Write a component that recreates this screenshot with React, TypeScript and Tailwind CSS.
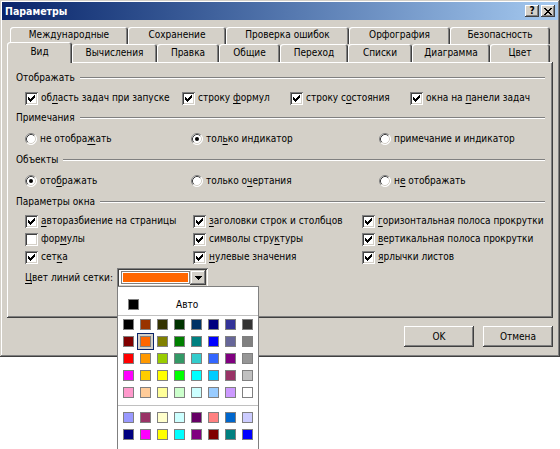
import React from 'react';

const CHART_FILLS = ['#9999ff', '#993366', '#ffffcc', '#ccffff', '#660066', '#ff8080', '#0066cc', '#ccccff'];
const CHART_LINES = ['#000080', '#ff00ff', '#ffff00', '#00ffff', '#800080', '#800000', '#008080', '#0000ff'];
const STANDARD = [
  ['#000000', '#993300', '#333300', '#003300', '#003366', '#000080', '#333399', '#333333'],
  ['#800000', '#ff6600', '#808000', '#008000', '#008080', '#0000ff', '#666699', '#808080'],
  ['#ff0000', '#ff9900', '#99cc00', '#339966', '#33cccc', '#3366ff', '#800080', '#969696'],
  ['#ff00ff', '#ffcc00', '#ffff00', '#00ff00', '#00ffff', '#00ccff', '#993366', '#c0c0c0'],
  ['#ff99cc', '#ffcc99', '#ffff99', '#ccffcc', '#ccffff', '#99ccff', '#cc99ff', '#ffffff'],
];

// text with one underlined access key
function M({ t, u }: { t: string; u?: number }) {
  if (u === undefined) return <>{t}</>;
  return (
    <>
      {t.slice(0, u)}
      <span className="underline underline-offset-[2px]">{t[u]}</span>
      {t.slice(u + 1)}
    </>
  );
}

function CheckBox({ checked }: { checked?: boolean }) {
  return (
    <span className="block w-[13px] h-[13px] shrink-0 bg-white shadow-[inset_1px_1px_#808080,inset_-1px_-1px_#ffffff,inset_2px_2px_#404040,inset_-2px_-2px_#d4d0c8]">
      {checked && (
        <svg width="13" height="13" viewBox="0 0 13 13" shapeRendering="crispEdges">
          <path
            transform="translate(1 1)"
            d="M8 2h1v1h-1z M7 3h2v1h-2z M2 4h1v1h-1z M6 4h3v1h-3z M2 5h2v1h-2z M5 5h3v1h-3z M2 6h5v1h-5z M3 7h3v1h-3z M4 8h1v1h-1z"
            fill="#000"
          />
        </svg>
      )}
    </span>
  );
}

function Radio({ checked }: { checked?: boolean }) {
  return (
    <svg width="12" height="12" viewBox="0 0 12 12" className="shrink-0">
      <circle cx="6" cy="6" r="5.5" fill="#fff" />
      <path d="M2.11 9.89 A5.5 5.5 0 0 1 9.89 2.11" stroke="#808080" fill="none" />
      <path d="M9.89 2.11 A5.5 5.5 0 0 1 2.11 9.89" stroke="#ffffff" fill="none" />
      <path d="M2.82 9.18 A4.5 4.5 0 0 1 9.18 2.82" stroke="#404040" fill="none" />
      <path d="M9.18 2.82 A4.5 4.5 0 0 1 2.82 9.18" stroke="#d4d0c8" fill="none" />
      {checked && <circle cx="6" cy="6" r="2" fill="#000" />}
    </svg>
  );
}

function Check({ t, u, checked, w }: { t: string; u?: number; checked?: boolean; w: string }) {
  return (
    <div className={`flex items-center gap-[3px] ${w}`}>
      <CheckBox checked={checked} />
      <span className="whitespace-nowrap">
        <M t={t} u={u} />
      </span>
    </div>
  );
}

function Option({ t, u, checked, w }: { t: string; u?: number; checked?: boolean; w: string }) {
  return (
    <div className={`flex items-center gap-[3px] ${w}`}>
      <Radio checked={checked} />
      <span className="whitespace-nowrap">
        <M t={t} u={u} />
      </span>
    </div>
  );
}

function Group({ title, mt }: { title: string; mt: string }) {
  return (
    <div className={`flex items-center h-[14px] pl-[9px] pr-[8px] ${mt}`}>
      <span className="whitespace-nowrap">{title}</span>
      <div className="flex-1 ml-[5px] h-[2px] border-t border-t-[#808080] border-b border-b-white" />
    </div>
  );
}

const backTabs = [
  { t: 'Международные', w: 'w-[118px]' },
  { t: 'Сохранение', w: 'w-[98px]' },
  { t: 'Проверка ошибок', w: 'w-[123px]' },
  { t: 'Орфография', w: 'w-[101px]' },
  { t: 'Безопасность', w: 'w-[100px]' },
];

const frontTabs = [
  { t: 'Вычисления', w: 'w-[85px]' },
  { t: 'Правка', w: 'w-[62px]' },
  { t: 'Общие', w: 'w-[61px]' },
  { t: 'Переход', w: 'w-[68px]' },
  { t: 'Списки', w: 'w-[64px]' },
  { t: 'Диаграмма', w: 'w-[78px]' },
  { t: 'Цвет', w: 'w-[60px]' },
];

function Swatch({ c, selected }: { c: string; selected?: boolean }) {
  return (
    <div
      className={`w-[17px] h-[17px] flex items-center justify-center ${
        selected ? 'border border-[#0a246a] bg-[#d4d0c8]' : ''
      }`}
    >
      <div className="w-[11px] h-[11px] border border-[#808080]" style={{ backgroundColor: c }} />
    </div>
  );
}

function Palette() {
  return (
    <div className="absolute left-[117px] top-[286px] w-[142px] h-[175px] bg-white border border-[#808080]">
      <div className="flex items-center h-[11px] mt-[12px] pl-[10px]">
        <div className="w-[11px] h-[11px] bg-black border border-[#808080]" />
        <span className="ml-[37px]">Авто</span>
      </div>
      <div className="mt-[5px] h-px bg-[#c0c0c0]" />
      <div className="pl-[2px]">
        {STANDARD.map((row, i) => (
          <div key={i} className="flex">
            {row.map((c, j) => (
              <Swatch key={j} c={c} selected={i === 1 && j === 1} />
            ))}
          </div>
        ))}
      </div>
      <div className="mt-[4px] h-px bg-[#c0c0c0]" />
      <div className="pl-[2px] mt-[3px]">
        {[CHART_FILLS, CHART_LINES].map((row, i) => (
          <div key={i} className="flex">
            {row.map((c, j) => (
              <Swatch key={j} c={c} />
            ))}
          </div>
        ))}
      </div>
    </div>
  );
}

export default function App() {
  return (
    <div className="relative w-[560px] h-[449px] overflow-hidden bg-white font-['DejaVu_Sans_Condensed','Liberation_Sans',Arial,sans-serif] text-[10px] leading-none text-[#000]">
      <div className="w-[560px] h-[357px] bg-[#d4d0c8] pt-[2px] px-[2px] flex flex-col shadow-[inset_-1px_-1px_#404040,inset_1px_1px_#d4d0c8,inset_-2px_-2px_#808080,inset_2px_2px_#ffffff]">
        {/* title bar */}
        <div className="h-[18px] bg-linear-to-r from-[#0a246a] to-[#a6caf0] flex items-center pl-[3px] pr-[3px]">
          <span className="font-bold text-white text-[10.5px]">Параметры</span>
          <div className="ml-auto flex gap-[2px]">
            <div className="w-[14px] h-[12px] bg-[#d4d0c8] flex items-center justify-center font-bold text-[10px] shadow-[inset_-1px_-1px_#404040,inset_1px_1px_#ffffff,inset_-2px_-2px_#808080,inset_2px_2px_#d4d0c8]">
              ?
            </div>
            <div className="w-[14px] h-[12px] bg-[#d4d0c8] flex items-center justify-center shadow-[inset_-1px_-1px_#404040,inset_1px_1px_#ffffff,inset_-2px_-2px_#808080,inset_2px_2px_#d4d0c8]">
              <svg width="8" height="7" viewBox="0 0 8 7" shapeRendering="crispEdges">
                <path
                  d="M0 0h2v1h-2z M6 0h2v1h-2z M1 1h2v1h-2z M5 1h2v1h-2z M2 2h4v1h-4z M3 3h2v1h-2z M2 4h4v1h-4z M1 5h2v1h-2z M5 5h2v1h-2z M0 6h2v1h-2z M6 6h2v1h-2z"
                  fill="#000"
                />
              </svg>
            </div>
          </div>
        </div>

        {/* tabs */}
        <div className="mt-[7px] ml-[8px] h-[17px] flex">
          {backTabs.map((tab) => (
            <div
              key={tab.t}
              className={`${tab.w} h-[17px] rounded-t-[3px] flex items-center justify-center pb-[1px] shadow-[inset_1px_1px_#ffffff,inset_-1px_0_#404040,inset_-2px_0_#808080]`}
            >
              {tab.t}
            </div>
          ))}
        </div>
        <div className="-mt-[2px] ml-[5px] h-[20px] flex items-start">
          <div className="relative z-10 w-[65px] h-[21px] bg-[#d4d0c8] rounded-t-[3px] flex items-center justify-center pb-[2px] shadow-[inset_1px_1px_#ffffff,inset_-1px_0_#404040,inset_-2px_0_#808080]">
            Вид
          </div>
          {frontTabs.map((tab) => (
            <div
              key={tab.t}
              className={`${tab.w} mt-[2px] h-[18px] bg-[#d4d0c8] rounded-t-[3px] flex items-center justify-center shadow-[inset_1px_1px_#ffffff,inset_-1px_0_#404040,inset_-2px_0_#808080]`}
            >
              {tab.t}
            </div>
          ))}
        </div>

        {/* panel */}
        <div className="ml-[5px] w-[546px] h-[256px] flex flex-col shadow-[inset_-1px_-1px_#404040,inset_1px_1px_#ffffff,inset_-2px_-2px_#808080]">
          <Group title="Отображать" mt="mt-[9px]" />
          <div className="mt-[5px] h-[16px] flex items-center pl-[18px]">
            <Check t="область задач при запуске" u={2} checked w="w-[157px]" />
            <Check t="строку формул" u={7} checked w="w-[108px]" />
            <Check t="строку состояния" u={8} checked w="w-[120px]" />
            <Check t="окна на панели задач" u={8} checked w="flex-1" />
          </div>

          <Group title="Примечания" mt="mt-[5px]" />
          <div className="mt-[6px] h-[16px] flex items-center pl-[18px]">
            <Option t="не отображать" u={9} w="w-[166px]" />
            <Option t="только индикатор" u={3} checked w="w-[188px]" />
            <Option t="примечание и индикатор" w="flex-1" />
          </div>

          <Group title="Объекты" mt="mt-[6px]" />
          <div className="mt-[6px] h-[16px] flex items-center pl-[18px]">
            <Option t="отображать" u={3} checked w="w-[166px]" />
            <Option t="только очертания" u={8} w="w-[188px]" />
            <Option t="не отображать" u={1} w="flex-1" />
          </div>

          <Group title="Параметры окна" mt="mt-[6px]" />
          <div className="mt-[3px] h-[18px] flex items-center pl-[18px]">
            <Check t="авторазбиение на страницы" u={0} checked w="w-[168px]" />
            <Check t="заголовки строк и столбцов" u={0} checked w="w-[169px]" />
            <Check t="горизонтальная полоса прокрутки" u={0} checked w="flex-1" />
          </div>
          <div className="h-[18px] flex items-center pl-[18px]">
            <Check t="формулы" u={3} w="w-[168px]" />
            <Check t="символы структуры" u={12} checked w="w-[169px]" />
            <Check t="вертикальная полоса прокрутки" u={0} checked w="flex-1" />
          </div>
          <div className="h-[18px] flex items-center pl-[18px]">
            <Check t="сетка" u={3} checked w="w-[168px]" />
            <Check t="нулевые значения" u={0} checked w="w-[169px]" />
            <Check t="ярлычки листов" u={0} checked w="flex-1" />
          </div>

          <div className="mt-[2px] h-[19px] flex items-center pl-[18px]">
            <span className="w-[92px] whitespace-nowrap">
              <M t="Цвет линий сетки:" u={0} />
            </span>
            <div className="w-[91px] h-[19px] bg-white flex items-center p-[2px] shadow-[inset_1px_1px_#808080,inset_-1px_-1px_#ffffff,inset_2px_2px_#404040,inset_-2px_-2px_#d4d0c8]">
              <div className="ml-[2px] w-[70px] h-[13px] border border-[#808080] p-px">
                <div className="w-full h-full bg-[#ff6600]" />
              </div>
              <div className="ml-auto w-[16px] h-[15px] bg-[#d4d0c8] flex items-center justify-center shadow-[inset_-1px_-1px_#404040,inset_1px_1px_#d4d0c8,inset_-2px_-2px_#808080,inset_2px_2px_#ffffff]">
                <svg width="7" height="4" viewBox="0 0 7 4" shapeRendering="crispEdges">
                  <path d="M0 0h7v1h-7z M1 1h5v1h-5z M2 2h3v1h-3z M3 3h1v1h-1z" fill="#000" />
                </svg>
              </div>
            </div>
          </div>
        </div>

        {/* buttons */}
        <div className="mt-[8px] mr-[5px] flex justify-end gap-[9px]">
          <div className="w-[70px] h-[21px] flex items-center justify-center shadow-[inset_-1px_-1px_#404040,inset_1px_1px_#ffffff,inset_-2px_-2px_#808080,inset_2px_2px_#d4d0c8]">
            OK
          </div>
          <div className="w-[70px] h-[21px] flex items-center justify-center shadow-[inset_-1px_-1px_#404040,inset_1px_1px_#ffffff,inset_-2px_-2px_#808080,inset_2px_2px_#d4d0c8]">
            Отмена
          </div>
        </div>
      </div>
      <Palette />
    </div>
  );
}
